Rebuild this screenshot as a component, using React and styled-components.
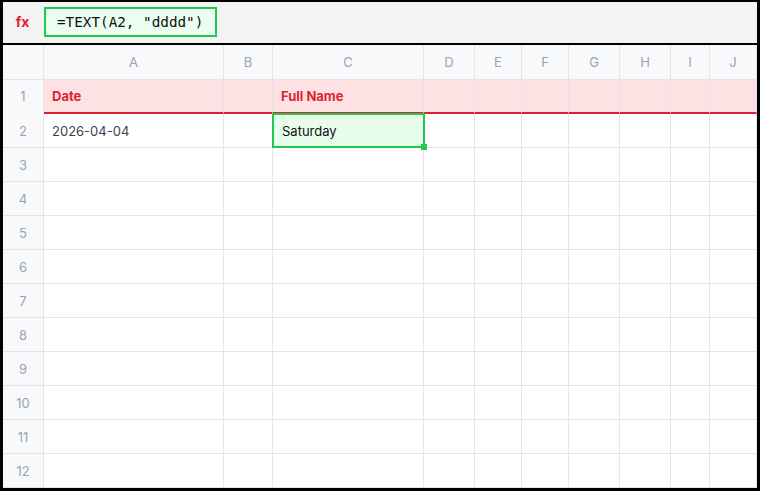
import React from "react";
import styled, { createGlobalStyle } from "styled-components";

const Global = createGlobalStyle`
  html, body { margin: 0; padding: 0; background: #000; }
  body { font-family: Inter, "Noto Sans", sans-serif; }
  * { box-sizing: border-box; }
`;

const Frame = styled.div`
  width: 760px;
  height: 491px;
  border-style: solid;
  border-color: #000;
  border-width: 2px 3px 3px 3px;
  background: #fff;
  display: flex;
  flex-direction: column;
  overflow: hidden;
`;

const FormulaBar = styled.div`
  height: 43px;
  flex: none;
  background: #f3f3f4;
  border-bottom: 2px solid #000;
  display: flex;
  align-items: center;
  padding: 0 0 2px 12px;
  gap: 14px;
`;

const Fx = styled.span`
  color: #dc2433;
  font-weight: 700;
  font-size: 14px;
  width: 15px;
  text-align: center;
`;

const FormulaBox = styled.div`
  width: 173px;
  height: 30px;
  border: 2px solid #1ec94c;
  background: #ebfdf0;
  display: flex;
  align-items: center;
  padding-left: 11px;
  font-family: "DejaVu Sans Mono", "Liberation Mono", monospace;
  font-size: 14.3px;
  color: #111;
  white-space: pre;
`;

const Grid = styled.div`
  display: grid;
  grid-template-columns: 41px 180px 49px 151px 51px 47px 47px 51px 51px 39px 47px;
  grid-auto-rows: 34px;
  grid-template-rows: 35px;
`;

const ColHead = styled.div`
  background: #f8f9fb;
  border-right: 1px solid #e3e5e9;
  border-bottom: 1px solid #e3e5e9;
  display: flex;
  align-items: center;
  justify-content: center;
  color: #9aa2b1;
  font-size: 13px;
`;

const RowNum = styled.div`
  background: #f8f9fb;
  border-right: 1px solid #e3e5e9;
  border-bottom: ${(p) => (p.$header ? "2px solid #f8f9fb" : "1px solid #e3e5e9")};
  display: flex;
  align-items: center;
  justify-content: center;
  color: #9aa2b1;
  font-size: 13px;
`;

const Cell = styled.div`
  position: relative;
  border-right: 1px solid #e3e5e9;
  border-bottom: ${(p) => (p.$header ? "2px solid #dc1f30" : "1px solid #e3e5e9")};
  background: ${(p) => (p.$header ? "#fee1e2" : p.$selected ? "#e7fdec" : "#fff")};
  display: flex;
  align-items: center;
  padding-left: ${(p) => (p.$selected ? "9px" : "8px")};
  font-size: 13px;
  font-weight: ${(p) => (p.$header ? 700 : 400)};
  color: ${(p) => (p.$header ? "#dc2433" : p.$selected ? "#111" : "#3b4250")};
  white-space: nowrap;
`;

const SelectBox = styled.div`
  position: absolute;
  z-index: 2;
  left: -1px;
  right: -2px;
  top: -1px;
  bottom: -1px;
  border: 2px solid #1ec94c;
  pointer-events: none;
`;

const Handle = styled.div`
  position: absolute;
  right: -4px;
  bottom: -4px;
  width: 6px;
  height: 6px;
  background: #1ec94c;
`;

const cols = ["A", "B", "C", "D", "E", "F", "G", "H", "I", "J"];

const data = {
  1: { A: "Date", C: "Full Name" },
  2: { A: "2026-04-04", C: "Saturday" },
};

export default function App() {
  const rows = Array.from({ length: 12 }, (_, i) => i + 1);
  return (
    <>
      <Global />
      <Frame>
        <FormulaBar>
          <Fx>fx</Fx>
          <FormulaBox>=TEXT(A2, "dddd")</FormulaBox>
        </FormulaBar>
        <Grid>
          <ColHead />
          {cols.map((c) => (
            <ColHead key={c}>{c}</ColHead>
          ))}
          {rows.map((r) => (
            <React.Fragment key={r}>
              <RowNum $header={r === 1}>{r}</RowNum>
              {cols.map((c) => {
                const selected = r === 2 && c === "C";
                return (
                  <Cell key={c} $header={r === 1} $selected={selected}>
                    {data[r]?.[c] || ""}
                    {selected && (
                      <SelectBox>
                        <Handle />
                      </SelectBox>
                    )}
                  </Cell>
                );
              })}
            </React.Fragment>
          ))}
        </Grid>
      </Frame>
    </>
  );
}
